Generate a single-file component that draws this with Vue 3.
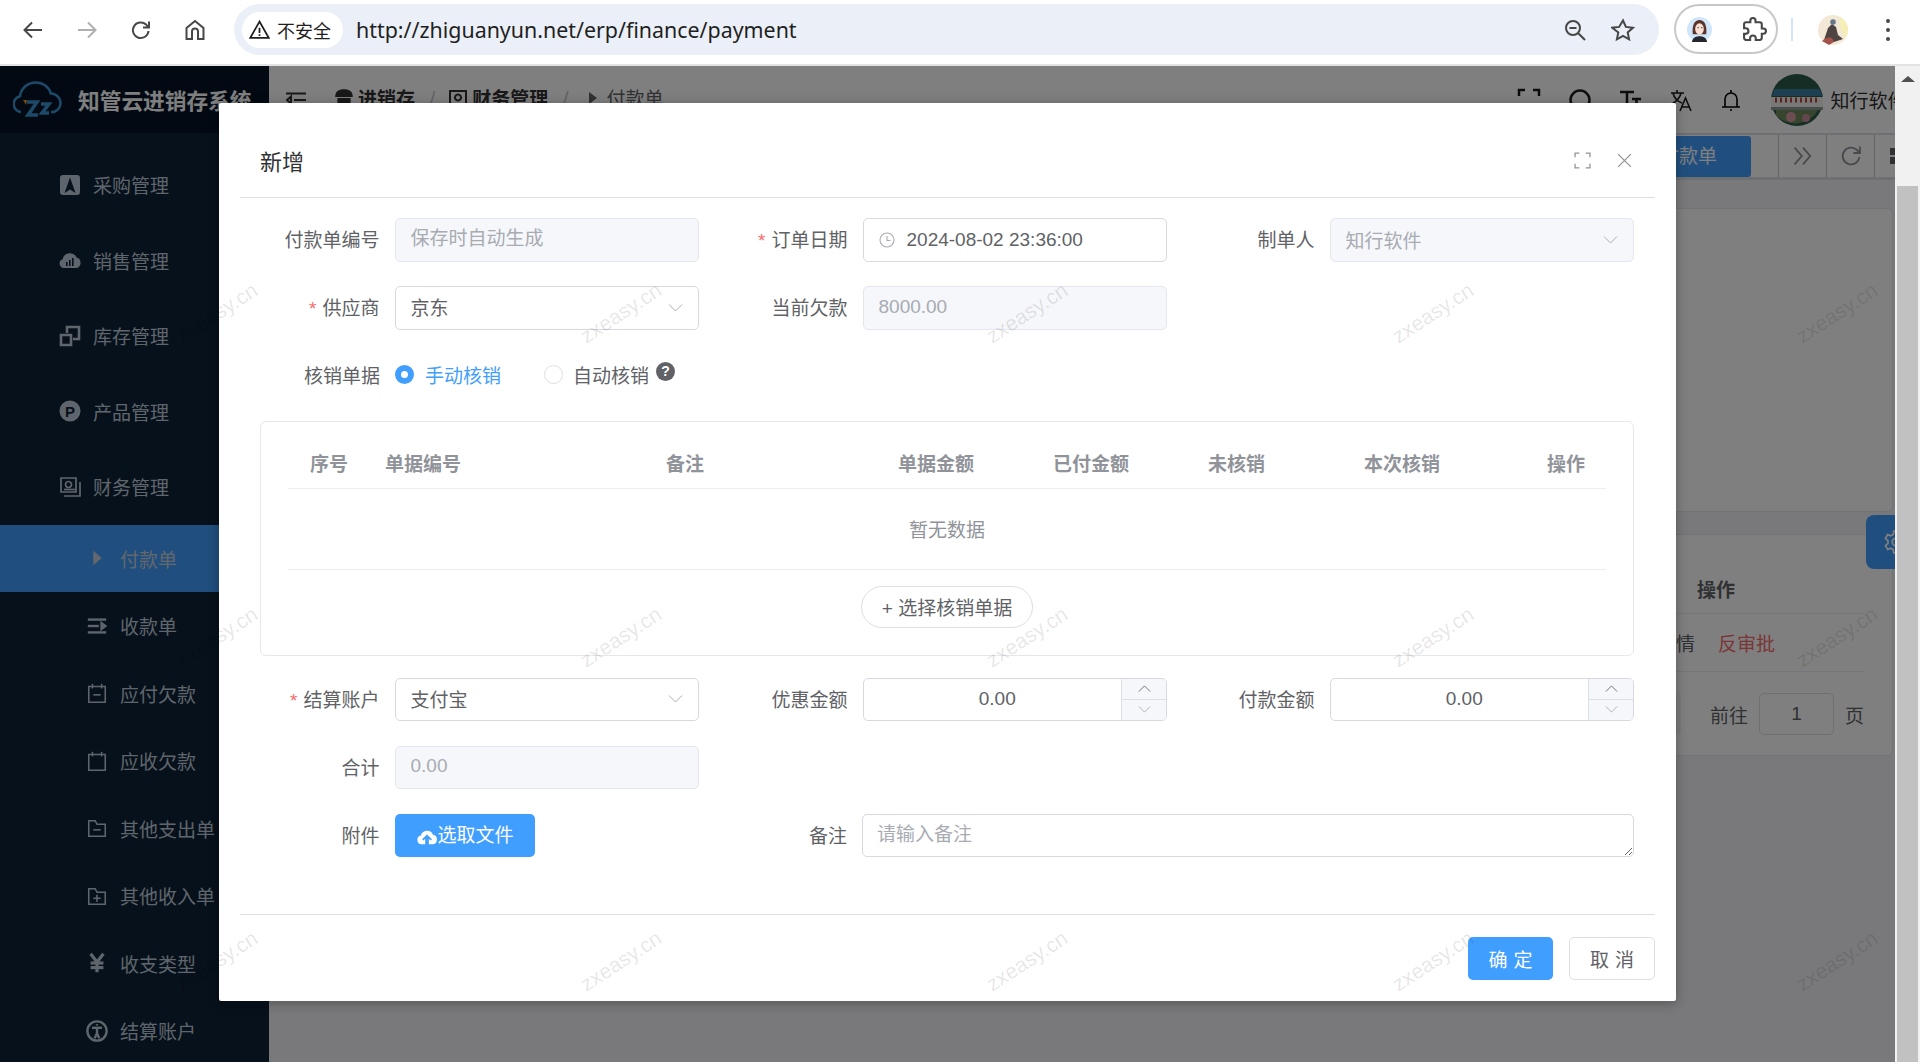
<script setup>
const topMenu = [
  { label: "采购管理", filled: true, paths: ["M5 2h14a3 3 0 0 1 3 3v14a3 3 0 0 1-3 3H5a3 3 0 0 1-3-3V5a3 3 0 0 1 3-3zM12 4.5 6.5 20l5.5-3.5 5.5 3.5z"] },
  { label: "销售管理", filled: true, paths: ["M6 20a4.5 4.5 0 0 1-1.5-8.7A7.5 7.5 0 0 1 18.7 9.6 5.4 5.4 0 0 1 18.5 20zM8 18h1.6v-4H8zM11 18h1.6v-6H11zM14 18h1.6V10H14z"] },
  { label: "库存管理", filled: false, thick: true, paths: ["M3 11h10v10H3z", "M9 9V3h12v12h-6"] },
  { label: "产品管理", filled: true, glyph: "P", paths: ["M12 1.5a10.5 10.5 0 1 0 0 21 10.5 10.5 0 0 0 0-21z"] },
  { label: "财务管理", filled: false, paths: ["M3 3h15v14H3z", "M6 21h16V7", "M10.500 6.500a3 3 0 1 0 .01 0z", "M6 14.500h11"] }
];

const subMenu = [
  { label: "付款单", active: true, filled: true, paths: ["M8 4l9 8-9 8z"] },
  { label: "收款单", filled: false, thick: true, paths: ["M2 5h20", "M2 12h12", "M2 19h20", "M17 9l4 3-4 3z"] },
  { label: "应付欠款", filled: false, paths: ["M3 5h18v17H3z", "M7 2v5", "M17 2v5", "M8 14h8"] },
  { label: "应收欠款", filled: false, paths: ["M3 5h18v17H3z", "M7 2v5", "M17 2v5"] },
  { label: "其他支出单", filled: false, paths: ["M3 4h7l2 4h9v13H3z", "M8 14h8"] },
  { label: "其他收入单", filled: false, paths: ["M3 4h7l2 4h9v13H3z", "M8 14.500h8", "M12 10.500v8"] },
  { label: "收支类型", filled: false, bold: true, paths: ["M5 2l7 9 7-9", "M12 11v11", "M5 12h14", "M5 17h14"] },
  { label: "结算账户", filled: false, thick: true, paths: ["M12 1.500a10.500 10.500 0 1 0 0 21 10.500 10.500 0 0 0 0-21z", "M12 8.500v6", "M6.500 8.500h11", "M9.500 20l2.500-5.500 2.500 5.500", "M12 4.500v1.500"] }
];

const headColumns = ["序号", "单据编号", "备注", "单据金额", "已付金额", "未核销", "本次核销", "操作"];

// 水印按固定间距铺满整屏
const watermarks = [];
for (const y of [313, 637, 961]) {
  for (const x of [217, 621, 1027, 1433, 1837]) {
    watermarks.push({ left: x - 55 + "px", top: y - 78 + "px" });
  }
}
</script>

<template>
  <div class="screen">
    <header class="browser-bar">
      <div class="nav-buttons">
        <svg class="chrome-icon" viewBox="0 0 24 24"><path d="M21 12H3.500M11 4.500 3.500 12l7.500 7.500" /></svg>
        <svg class="chrome-icon is-off" viewBox="0 0 24 24"><path d="M3 12h17.500M13 4.500l7.500 7.500-7.500 7.500" /></svg>
        <svg class="chrome-icon" viewBox="0 0 24 24"><path d="M19.500 13a7.800 7.800 0 1 1-2.400-6.400L19.500 9M20 3.500V9.500H14" /></svg>
        <svg class="chrome-icon" viewBox="0 0 24 24"><path d="M3.500 21V10L12 3l8.500 7v11H15v-7.500a3 3 0 0 0-6 0V21z" /></svg>
      </div>
      <div class="omnibox">
        <div class="security">
          <svg class="warn-icon" viewBox="0 0 24 24"><path d="M12 3 1.500 21.500h21z" /><path d="M12 10v6M12 17.500v1.800" /></svg>
          <span>不安全</span>
        </div>
        <span class="url">http://zhiguanyun.net/erp/finance/payment</span>
        <svg class="chrome-icon zoom-out" viewBox="0 0 24 24"><circle cx="10" cy="10" r="7" /><path d="M6.500 10h7M15 15l7 7" /></svg>
        <svg class="chrome-icon star" viewBox="0 0 24 24"><path d="m12 2.500 2.900 6.400 7 .8-5.200 4.700 1.400 6.900-6.100-3.500-6.100 3.500 1.400-6.900L1.100 9.700l7-.8z" /></svg>
      </div>
      <div class="ext-pill">
        <svg class="face" viewBox="0 0 26 26">
          <circle cx="13" cy="13" r="13" fill="#cfe6fb" />
          <path d="M6 18c-1-10 2-15 7-15s8 5 7 15z" fill="#5a342a" />
          <ellipse cx="13" cy="12.500" rx="4.500" ry="6" fill="#f9dfd2" />
          <path d="M11 11h1M15 11h1" stroke="#222" stroke-width="1.200" />
          <path d="M5 26c1-5 5-6 8-6s7 1 8 6z" fill="#23262d" />
        </svg>
        <svg class="chrome-icon puzzle" viewBox="0 0 24 24"><path d="M20.500 11H19V7c0-1.100-.9-2-2-2h-4V3.500C13 2.120 11.880 1 10.500 1S8 2.120 8 3.500V5H4c-1.100 0-1.990.9-1.990 2v3.800H3.500c1.490 0 2.700 1.210 2.700 2.700s-1.210 2.700-2.700 2.700H2V20c0 1.100.9 2 2 2h3.800v-1.500c0-1.490 1.210-2.700 2.700-2.700s2.700 1.210 2.700 2.700V22H17c1.100 0 2-.9 2-2v-4h1.500c1.380 0 2.500-1.120 2.500-2.500S21.880 11 20.500 11z" /></svg>
      </div>
      <span class="bar-divider"></span>
      <svg class="profile" viewBox="0 0 30 30">
        <circle cx="15" cy="15" r="15" fill="#f3e7d6" />
        <path d="M22 2a15 15 0 0 1 8 13c0 3-1 6-3 8l-5-12z" fill="#f6efb5" />
        <path d="M6 25l4-12 4-4 4 3 2 8 5 4-9 3z" fill="#4e4441" />
        <circle cx="15" cy="7" r="2.800" fill="#64788a" />
        <path d="M4 26c4-4 7-4 10-3l2 4-5 3z" fill="#a4534c" />
      </svg>
      <div class="dots"><i></i><i></i><i></i></div>
    </header>

    <div class="viewport">
      <aside class="sidebar">
        <div class="logo-bar">
          <svg class="logo" viewBox="0 0 50 37">
            <path class="logo-cloud" d="M8 31a8 8 0 0 1-1-15.800C8 7 15 1.500 23 1.500c7 0 13 4.600 14.800 11A9.500 9.500 0 0 1 41 31h-3" />
            <path class="logo-z" d="M14 21h10l-9 13h10M28 23h8l-7 9h7" />
            <path class="logo-dot" d="M10 19h4l-1 5z" />
          </svg>
          <span class="logo-title">知管云进销存系统</span>
        </div>
        <div v-for="item in topMenu" :key="item.label" class="menu-item">
          <svg class="menu-icon" :class="{ 'is-filled': item.filled, 'is-thick': item.thick }" viewBox="0 0 24 24">
            <path v-for="d in item.paths" :key="d" :d="d" fill-rule="evenodd" />
            <text v-if="item.glyph" x="12" y="17.500" text-anchor="middle" class="icon-glyph">{{ item.glyph }}</text>
          </svg>
          <span>{{ item.label }}</span>
        </div>
        <div
          v-for="item in subMenu"
          :key="item.label"
          class="submenu-item"
          :class="{ 'is-active': item.active }"
        >
          <svg
            class="menu-icon"
            :class="{ 'is-filled': item.filled, 'is-bold': item.bold, 'is-thick': item.thick }"
            viewBox="0 0 24 24"
          >
            <path v-for="d in item.paths" :key="d" :d="d" />
          </svg>
          <span>{{ item.label }}</span>
        </div>
      </aside>

      <main class="main">
        <div class="navbar">
          <svg class="hamburger" viewBox="0 0 20 16"><path d="M0 1.500h20M8 8h12M0 14.500h20M5 4.500 1 8l4 3.500z" /></svg>
          <nav class="crumbs">
            <svg class="crumb-icon" viewBox="0 0 20 20"><path d="M2 9c0-5 3-7 8-7s8 2 8 7zM4 10h12v8H4z" /></svg>
            <b>进销存</b>
            <i>/</i>
            <svg class="crumb-icon is-line" viewBox="0 0 20 20"><path d="M2 3h16v15H2zM6.500 18h7M10 6.500a3 3 0 1 0 .01 0z" /></svg>
            <b>财务管理</b>
            <i>/</i>
            <svg class="crumb-tri" viewBox="0 0 10 14"><path d="M1 1l8 6-8 6z" /></svg>
            <span>付款单</span>
          </nav>
          <div class="nav-right">
            <svg class="nav-icon" viewBox="0 0 24 24"><path d="M2 8V2h6M16 2h6v6M22 16v6h-6M8 22H2v-6" /></svg>
            <svg class="nav-icon" viewBox="0 0 24 24"><circle cx="12" cy="12" r="9.500" /></svg>
            <svg class="nav-icon" viewBox="0 0 24 24"><path d="M2 4h14M9 4v17M14 11h9M18.500 11v10" /></svg>
            <svg class="nav-icon thin" viewBox="0 0 24 24"><path d="M2 5h13M8 2v3M4 5c1 5 5 9 9 10M12 5c-1 5-4 8-9 11M11 23l5.500-13L22 23M13 19h7" /></svg>
            <svg class="nav-icon thin bell" viewBox="0 0 24 24"><path d="M3 19h18M6 19v-8a6 6 0 0 1 12 0v8M12 2v3M11 22h2" /></svg>
            <svg class="user-avatar" viewBox="0 0 52 54">
              <circle cx="26" cy="27" r="26" fill="#2d5a4c" />
              <path d="M3 16h46l2 7H1z" fill="#3a7fa4" />
              <path d="M0 24h52v10H0z" fill="#f0f0ec" />
              <path d="M4 27h44" stroke="#b8453f" stroke-width="5" stroke-dasharray="2 3" fill="none" />
              <path d="M0 34h52v3H0z" fill="#8d9a97" />
              <path d="M5 37h42a26 26 0 0 1-42 5z" fill="#6e8a5e" />
              <circle cx="20" cy="44" r="5" fill="#d89aa5" />
              <circle cx="35" cy="45" r="4" fill="#c98c9a" />
            </svg>
            <span class="user-name">知行软件</span>
          </div>
        </div>

        <div class="tags-bar">
          <span class="tag-active">付款单</span>
          <span class="tag-tool"><svg viewBox="0 0 20 20"><path d="M3 3l6 7-6 7M10 3l6 7-6 7" /></svg></span>
          <span class="tag-tool"><svg viewBox="0 0 20 20"><path d="M17 11a7 7 0 1 1-2-6l2 2M17.500 2v5.500H12" /></svg></span>
          <span class="tag-tool is-grid"><i></i><i></i></span>
        </div>

        <div class="content">
          <section class="bg-card search-card"></section>
          <section class="bg-card table-card">
            <div class="bg-row bg-head"><b>操作</b></div>
            <div class="bg-row"><span>详情<em>反审批</em></span></div>
            <div class="pager">
              <span class="pager-next"></span>
              <span>前往</span>
              <span class="pager-input">1</span>
              <span>页</span>
            </div>
          </section>
        </div>

        <div class="settings-tab">
          <svg viewBox="0 0 24 24"><path d="M10 2h4l.6 3 2.200 1.200 2.900-1 2 3.500-2.300 2v2.600l2.300 2-2 3.500-2.900-1-2.200 1.200-.6 3h-4l-.6-3-2.200-1.200-2.900 1-2-3.500 2.300-2v-2.600l-2.300-2 2-3.500 2.900 1L9.400 5z" /><circle cx="12" cy="12" r="3.500" /></svg>
        </div>
      </main>

      <div class="scrollbar">
        <span class="scroll-up"></span>
        <span class="scroll-thumb"></span>
      </div>

      <div class="mask"></div>

      <div class="dialog">
        <div class="dialog-head">
          <span class="dialog-title">新增</span>
          <svg class="head-btn" viewBox="0 0 16 16"><path d="M1 5V1h4M11 1h4v4M15 11v4h-4M5 15H1v-4" /></svg>
          <svg class="head-btn" viewBox="0 0 16 16"><path d="M2 2l12 12M14 2 2 14" /></svg>
        </div>

        <form class="form-body" @submit.prevent>
          <div class="form-rows">
            <div class="form-item">
              <label>付款单编号</label>
              <input class="field" disabled placeholder="保存时自动生成" />
            </div>
            <div class="form-item">
              <label class="required">订单日期</label>
              <div class="field date-field">
                <svg class="clock" viewBox="0 0 16 16"><circle cx="8" cy="8" r="7" /><path d="M8 4v4.500h3.500" /></svg>
                <span>2024-08-02 23:36:00</span>
              </div>
            </div>
            <div class="form-item">
              <label>制单人</label>
              <div class="field select-field is-disabled">
                <span>知行软件</span>
                <svg class="chevron" viewBox="0 0 14 8"><path d="M.5.500 7 7 13.500.500" /></svg>
              </div>
            </div>

            <div class="form-item">
              <label class="required">供应商</label>
              <div class="field select-field">
                <span>京东</span>
                <svg class="chevron" viewBox="0 0 14 8"><path d="M.5.500 7 7 13.500.500" /></svg>
              </div>
            </div>
            <div class="form-item">
              <label>当前欠款</label>
              <input class="field" disabled value="8000.00" />
            </div>
            <div></div>

            <div class="form-item span-all">
              <label>核销单据</label>
              <div class="radio-group">
                <span class="radio is-checked"><i></i>手动核销</span>
                <span class="radio"><i></i>自动核销</span>
                <span class="help">?</span>
              </div>
            </div>
          </div>

          <div class="bill-card">
            <div class="bill-head">
              <span v-for="col in headColumns" :key="col">{{ col }}</span>
            </div>
            <div class="bill-empty"><span>暂无数据</span></div>
            <div class="bill-action">
              <button type="button" class="round-btn">+ 选择核销单据</button>
            </div>
          </div>

          <div class="form-rows">
            <div class="form-item">
              <label class="required">结算账户</label>
              <div class="field select-field">
                <span>支付宝</span>
                <svg class="chevron" viewBox="0 0 14 8"><path d="M.5.500 7 7 13.500.500" /></svg>
              </div>
            </div>
            <div class="form-item">
              <label>优惠金额</label>
              <div class="field number-field">
                <span class="number-value">0.00</span>
                <span class="steppers">
                  <span><svg viewBox="0 0 14 8"><path d="M.5 7.500 7 1l6.500 6.500" /></svg></span>
                  <span><svg class="is-off" viewBox="0 0 14 8"><path d="M.5.500 7 7 13.500.500" /></svg></span>
                </span>
              </div>
            </div>
            <div class="form-item">
              <label>付款金额</label>
              <div class="field number-field">
                <span class="number-value">0.00</span>
                <span class="steppers">
                  <span><svg viewBox="0 0 14 8"><path d="M.5 7.500 7 1l6.500 6.500" /></svg></span>
                  <span><svg class="is-off" viewBox="0 0 14 8"><path d="M.5.500 7 7 13.500.500" /></svg></span>
                </span>
              </div>
            </div>

            <div class="form-item">
              <label>合计</label>
              <input class="field" disabled value="0.00" />
            </div>
            <div></div>
            <div></div>

            <div class="form-item">
              <label>附件</label>
              <button type="button" class="upload-btn">
                <svg viewBox="0 0 22 18"><path fill-rule="evenodd" d="M5 17.500a4.800 4.800 0 0 1-.7-9.500A7 7 0 0 1 17.600 7a5.300 5.300 0 0 1-.6 10.500h-4v-6l2 2 1.400-1.400L11 6.800l-5.400 5.300L7 13.500l2-2v6z" /></svg>
                选取文件
              </button>
            </div>
            <div class="form-item span-two">
              <label>备注</label>
              <textarea class="field remark" placeholder="请输入备注"></textarea>
            </div>
          </div>
        </form>

        <div class="dialog-foot">
          <button type="button" class="foot-btn is-primary">确定</button>
          <button type="button" class="foot-btn">取消</button>
        </div>
      </div>

      <span v-for="(pos, i) in watermarks" :key="i" class="watermark" :style="pos">zxeasy.cn</span>
    </div>
  </div>
</template>

<style scoped>
.screen {
  width: 1920px;
  height: 1062px;
  overflow: hidden;
  font-family: "Liberation Sans", "Noto Sans CJK SC", sans-serif;
  font-size: 19px;
  color: #606266;
}

/* browser chrome */
.browser-bar {
  height: 64px;
  border-bottom: 2px solid #e2e3e5;
  background: #fff;
  display: flex;
  align-items: flex-start;
  position: relative;
}

.nav-buttons {
  width: 234px;
  padding: 18px 0 0 21px;
  display: flex;
  gap: 30px;
  box-sizing: border-box;
}

.chrome-icon {
  width: 24px;
  height: 24px;
  flex: none;
  fill: none;
  stroke: #474747;
  stroke-width: 2;
}

.chrome-icon.is-off {
  stroke: #b0b0b0;
}

.omnibox {
  width: 1425px;
  height: 51px;
  margin-top: 4px;
  border-radius: 26px;
  background: #ebeff8;
  display: flex;
  align-items: center;
  padding-left: 8px;
  box-sizing: border-box;
}

.security {
  width: 101px;
  height: 36px;
  border-radius: 18px;
  background: #fff;
  display: flex;
  align-items: center;
  padding-left: 7px;
  gap: 7px;
  box-sizing: border-box;
  color: #1f1f1f;
  font-size: 18px;
}

.warn-icon {
  width: 21px;
  height: 21px;
  fill: none;
  stroke: #1f1f1f;
  stroke-width: 2;
}

.url {
  margin-left: 13px;
  font-family: "Noto Sans", sans-serif;
  font-size: 21.400px;
  color: #1f1f1f;
}

.zoom-out {
  margin-left: auto;
  margin-right: 24px;
}

.star {
  margin-right: 24px;
}

.ext-pill {
  width: 104px;
  height: 50px;
  margin: 4px 0 0 15px;
  border: 2px solid #c8c8c8;
  border-radius: 26px;
  box-sizing: border-box;
  display: flex;
  align-items: center;
  padding-left: 11px;
  gap: 30px;
}

.face {
  width: 25px;
  height: 25px;
  flex: none;
}

.puzzle {
  width: 25px;
  height: 25px;
}

.bar-divider {
  width: 2px;
  height: 23px;
  margin: 18px 0 0 13px;
  background: #d3e3fd;
}

.profile {
  width: 30px;
  height: 30px;
  margin: 15px 0 0 25px;
}

.dots {
  margin: 19px 0 0 38px;
  display: flex;
  flex-direction: column;
  gap: 5px;
}

.dots i {
  width: 4px;
  height: 4px;
  border-radius: 50%;
  background: #474747;
}

/* page behind the dialog */
.viewport {
  height: 996px;
  position: relative;
  overflow: hidden;
  display: flex;
}

.sidebar {
  width: 269px;
  flex: none;
  background: #0e2236;
  color: #bfcbd9;
}

.logo-bar {
  height: 67px;
  background: #051326;
  margin-bottom: 14px;
  display: flex;
  align-items: center;
  padding-left: 13px;
}

.logo {
  width: 50px;
  height: 37px;
  flex: none;
}

.logo-cloud {
  fill: none;
  stroke: #3a94d0;
  stroke-width: 2.500;
}

.logo-z {
  fill: none;
  stroke: #3a94d0;
  stroke-width: 3.500;
}

.logo-dot {
  fill: #e09a20;
}

.logo-title {
  margin-left: 15px;
  font-size: 21.700px;
  font-weight: 700;
  color: #fff;
  white-space: nowrap;
}

.menu-item {
  height: 75.500px;
  display: flex;
  align-items: center;
  padding-left: 58px;
  gap: 11px;
}

.submenu-item {
  height: 67.500px;
  display: flex;
  align-items: center;
  padding-left: 86px;
  gap: 12px;
}

.submenu-item.is-active {
  background: #409eff;
  color: #c8d0da;
}

.menu-icon {
  width: 24px;
  height: 24px;
  flex: none;
  fill: none;
  stroke: currentColor;
  stroke-width: 1.700;
}

.submenu-item .menu-icon {
  width: 22px;
  height: 22px;
}

.menu-icon.is-filled {
  fill: currentColor;
  stroke: none;
}

.menu-icon.is-thick {
  stroke-width: 2.600;
}

.menu-icon.is-bold {
  stroke-width: 3.500;
}

.icon-glyph {
  fill: #0e2236;
  font-size: 15px;
  font-weight: 700;
}

.main {
  flex: 1;
  min-width: 0;
  position: relative;
  background: #f2f3f6;
  display: flex;
  flex-direction: column;
  overflow: hidden;
}

.navbar {
  height: 67px;
  flex: none;
  background: #fff;
  display: flex;
  align-items: center;
  padding-left: 17px;
}

.hamburger {
  width: 20px;
  height: 16px;
  fill: none;
  stroke: #303133;
  stroke-width: 2;
}

.crumbs {
  margin-left: 27px;
  margin-top: -4px;
  display: flex;
  align-items: center;
  color: #303133;
}

.crumbs i {
  font-style: normal;
  color: #c0c4cc;
  margin: 0 13px 0 15px;
}

.crumbs b {
  font-weight: 700;
}

.crumb-icon {
  width: 22px;
  height: 22px;
  margin-right: 3px;
  fill: #303133;
}

.crumb-icon.is-line {
  width: 20px;
  height: 20px;
  margin-right: 4px;
  fill: none;
  stroke: #303133;
  stroke-width: 2;
}

.crumb-tri {
  width: 10px;
  height: 14px;
  margin: 0 9px 0 6px;
  fill: #606266;
}

.crumbs span {
  color: #606266;
}

.nav-right {
  margin-left: auto;
  width: 391px;
  flex: none;
  display: flex;
  align-items: center;
  overflow: hidden;
  padding-left: 13px;
  box-sizing: border-box;
  color: #303133;
}

.nav-icon {
  width: 24px;
  height: 24px;
  flex: none;
  margin-right: 26.500px;
  fill: none;
  stroke: #1a1a1a;
  stroke-width: 2.500;
}

.nav-icon.thin {
  stroke-width: 1.600;
}

.bell {
  stroke: #000;
  stroke-width: 2;
}

.user-avatar {
  width: 52px;
  height: 54px;
  flex: none;
  margin-left: 1px;
}

.user-name {
  margin-left: 8px;
  white-space: nowrap;
  color: #303133;
}

.tags-bar {
  height: 47px;
  flex: none;
  box-sizing: border-box;
  background: #fff;
  border-top: 2px solid #dcdfe6;
  border-bottom: 3px solid #dcdfe6;
  display: flex;
  justify-content: flex-end;
  padding-right: 0;
  overflow: hidden;
}

.tag-active {
  height: 41px;
  margin: 1px 27px 0 0;
  padding: 0 34px 0 60px;
  border-radius: 3px;
  background: #409eff;
  color: #fff;
  line-height: 41px;
}

.tag-tool {
  width: 47px;
  flex: none;
  border-left: 1px solid #c8c9cc;
  display: flex;
  align-items: center;
  justify-content: center;
}

.tag-tool svg {
  width: 24px;
  height: 24px;
  fill: none;
  stroke: #909399;
  stroke-width: 1.500;
}

.tag-tool.is-grid {
  width: 21px;
  flex-direction: column;
  gap: 2px;
  align-items: flex-start;
  padding-left: 15px;
  box-sizing: border-box;
  justify-content: center;
}

.tag-tool.is-grid i {
  width: 6px;
  height: 7px;
  background: #606266;
}

.content {
  padding: 28px 2px 0 20px;
  display: flex;
  flex-direction: column;
  gap: 22px;
}

.bg-card {
  background: #fff;
  border: 1px solid #e4e7ed;
  border-radius: 6px;
  box-sizing: border-box;
}

.search-card {
  height: 304px;
}

.table-card {
  height: 222px;
  padding-right: 28px;
}

.bg-row {
  display: grid;
  grid-template-columns: 1fr 296px;
  border-bottom: 1px solid #ebeef5;
  height: 57px;
  align-items: center;
  justify-items: center;
}

.bg-row > * {
  grid-column: 2;
}

.bg-head {
  height: 79px;
  padding-top: 28px;
  box-sizing: border-box;
  color: #606266;
}

.bg-row em {
  font-style: normal;
  color: #f56c6c;
  margin-left: 23px;
}

.pager {
  margin-top: 21px;
  display: flex;
  justify-content: flex-end;
  align-items: center;
  gap: 11px;
}

.pager-next {
  width: 42px;
  height: 42px;
  margin-right: 18px;
  border-radius: 3px;
  background: #f4f4f5;
}

.pager-input {
  width: 75px;
  height: 42px;
  border: 1px solid #dcdfe6;
  border-radius: 5px;
  box-sizing: border-box;
  text-align: center;
  line-height: 40px;
}

.settings-tab {
  position: absolute;
  right: 0;
  top: 449px;
  width: 29px;
  height: 54px;
  border-radius: 8px 0 0 8px;
  background: #409eff;
  overflow: hidden;
  padding: 14px 0 0 17px;
  box-sizing: border-box;
}

.settings-tab svg {
  width: 26px;
  height: 26px;
  fill: none;
  stroke: #fff;
  stroke-width: 1.600;
}

.scrollbar {
  width: 25px;
  flex: none;
  background: #f1f1f1;
  display: flex;
  flex-direction: column;
  align-items: center;
}

.scroll-up {
  margin-top: 10px;
  border-left: 7px solid transparent;
  border-right: 7px solid transparent;
  border-bottom: 6px solid #505050;
}

.scroll-thumb {
  width: 21px;
  margin-top: 104px;
  flex: 1;
  background: #c1c1c1;
}

.mask {
  position: absolute;
  inset: 0 25px 0 0;
  background: rgba(0, 0, 0, 0.5);
}

/* dialog */
.dialog {
  position: absolute;
  left: 219px;
  top: 37px;
  width: 1457px;
  height: 898px;
  background: #fff;
  border-radius: 2px;
  box-shadow: 0 2px 12px rgba(0, 0, 0, 0.3);
  display: flex;
  flex-direction: column;
}

.dialog-head {
  height: 95px;
  margin: 0 21px;
  border-bottom: 1px solid #dcdfe6;
  box-sizing: border-box;
  display: flex;
  align-items: center;
  padding: 20px 0 0 20px;
}

.dialog-title {
  flex: 1;
  font-size: 22px;
  color: #303133;
}

.head-btn {
  width: 17px;
  height: 17px;
  margin-right: 25px;
  fill: none;
  stroke: #909399;
  stroke-width: 1.200;
}

.head-btn:last-child {
  margin-right: 22px;
}

.form-body {
  margin: 20px 0 0 21px;
  flex: 1;
  min-height: 0;
}

.form-rows {
  display: grid;
  grid-template-columns: 459px 468px 467px;
  grid-auto-rows: 43.500px;
  row-gap: 24.500px;
}

.form-item {
  display: flex;
  justify-content: flex-end;
  align-items: center;
  gap: 15px;
  min-width: 0;
}

.form-item label {
  white-space: nowrap;
  margin-top: -2px;
}

.form-item label.required::before {
  content: "*";
  color: #f56c6c;
  margin-right: 6px;
}

.span-all {
  grid-column: 1 / -1;
  justify-content: flex-start;
  padding-left: 64px;
}

.span-two {
  grid-column: 2 / -1;
}

.field {
  width: 304.500px;
  height: 100%;
  flex: none;
  box-sizing: border-box;
  border: 1px solid #d6d9e0;
  border-radius: 5px;
  background: #fff;
  padding: 0 15px;
  font: inherit;
  color: #606266;
  outline: none;
  display: flex;
  align-items: center;
}

input.field:disabled,
.field.is-disabled {
  background: #f5f7fa;
  border-color: #e4e7ed;
  color: #a8abb2;
}

input.field:disabled {
  padding-bottom: 2px;
}

input.field::placeholder,
textarea.field::placeholder {
  color: #a8abb2;
  opacity: 1;
}

.date-field {
  gap: 12px;
}

.clock {
  width: 16px;
  height: 16px;
  flex: none;
  fill: none;
  stroke: #a8abb2;
  stroke-width: 1.100;
}

.select-field {
  justify-content: space-between;
  padding-right: 15px;
}

.select-field:not(.is-disabled) span {
  margin-top: -2px;
}

.chevron {
  width: 15px;
  height: 8px;
  fill: none;
  stroke: #a8abb2;
  stroke-width: 1;
}

.number-field {
  padding: 0;
  overflow: hidden;
}

.number-value {
  flex: 1;
  padding-left: 10px;
  text-align: center;
}

.steppers {
  width: 44px;
  height: 100%;
  flex: none;
  border-left: 1px solid #dcdfe6;
  background: #f5f7fa;
  display: flex;
  flex-direction: column;
}

.steppers span {
  flex: 1;
  display: flex;
  align-items: center;
  justify-content: center;
}

.steppers span + span {
  border-top: 1px solid #dcdfe6;
}

.steppers svg {
  width: 13px;
  height: 7px;
  fill: none;
  stroke: #606266;
  stroke-width: 1;
}

.steppers svg.is-off {
  stroke: #a8abb2;
}

.radio-group {
  display: flex;
  align-items: center;
  margin-top: -2px;
}

.radio {
  display: flex;
  align-items: center;
  gap: 11px;
  margin-right: 43px;
}

.radio i {
  width: 19px;
  height: 19px;
  box-sizing: border-box;
  border: 1px solid #dcdfe6;
  border-radius: 50%;
  background: #fff;
}

.radio.is-checked {
  color: #409eff;
}

.radio.is-checked i {
  border: 6.500px solid #409eff;
}

.radio + .radio {
  gap: 10px;
  margin-right: 7px;
}

.help {
  width: 19px;
  height: 19px;
  margin-top: -6px;
  border-radius: 50%;
  background: #606266;
  color: #fff;
  font-size: 14px;
  font-weight: 700;
  line-height: 19px;
  text-align: center;
}

.bill-card {
  width: 1374px;
  height: 235px;
  margin: 23.500px 0 21.500px 20px;
  border: 1px solid #e4e7ed;
  border-radius: 6px;
  box-sizing: border-box;
  padding: 0 27px;
}

.bill-head {
  height: 67px;
  box-sizing: border-box;
  padding-top: 14px;
  border-bottom: 1px solid #ebeef5;
  display: grid;
  grid-template-columns: 82px 281px 232px 155px 155px 156px 176px 82px;
  align-items: center;
  font-weight: 700;
  color: #909399;
}

.bill-head span {
  padding-left: 15px;
}

.bill-head span:first-child {
  padding-left: 0;
  text-align: center;
}

.bill-head span:last-child {
  padding-left: 0;
  text-align: center;
}

.bill-empty {
  height: 81px;
  box-sizing: border-box;
  border-bottom: 1px solid #ebeef5;
  display: flex;
  align-items: center;
  justify-content: center;
  color: #909399;
}

.bill-empty span {
  margin-top: -2px;
}

.bill-action {
  padding-top: 16px;
  display: flex;
  justify-content: center;
}

.round-btn {
  width: 172px;
  height: 42px;
  border: 1px solid #dcdfe6;
  border-radius: 21px;
  background: #fff;
  font: inherit;
  color: #606266;
  padding: 0 0 2px;
}

.upload-btn {
  width: 140px;
  height: 100%;
  flex: none;
  margin-right: 164.500px;
  border: 0;
  border-radius: 5px;
  background: #409eff;
  color: #fff;
  font: inherit;
  display: flex;
  align-items: center;
  justify-content: center;
  padding: 0 0 3px 2px;
}

.upload-btn svg {
  width: 20px;
  height: 17px;
  fill: #fff;
  margin-top: 5px;
}

.remark {
  width: 772px;
  display: block;
  padding: 6px 14px 0;
  resize: both;
  line-height: 28px;
}

.dialog-foot {
  height: 87px;
  margin: 0 21px;
  flex: none;
  border-top: 1px solid #dcdfe6;
  box-sizing: border-box;
  padding-top: 22px;
  display: flex;
  justify-content: flex-end;
  gap: 16px;
}

.foot-btn {
  width: 86px;
  height: 43px;
  border: 1px solid #dcdfe6;
  border-radius: 5px;
  background: #fff;
  font: inherit;
  letter-spacing: 6px;
  text-indent: 6px;
  color: #606266;
  padding: 0;
}

.foot-btn.is-primary {
  width: 85px;
  border: 0;
  background: #409eff;
  color: #fff;
}

.watermark {
  position: absolute;
  width: 110px;
  text-align: center;
  font-size: 21px;
  color: rgba(0, 0, 0, 0.11);
  transform: rotate(-33deg);
  white-space: nowrap;
  pointer-events: none;
}
</style>

<style>
html,
body {
  margin: 0;
  overflow: hidden;
}
</style>
